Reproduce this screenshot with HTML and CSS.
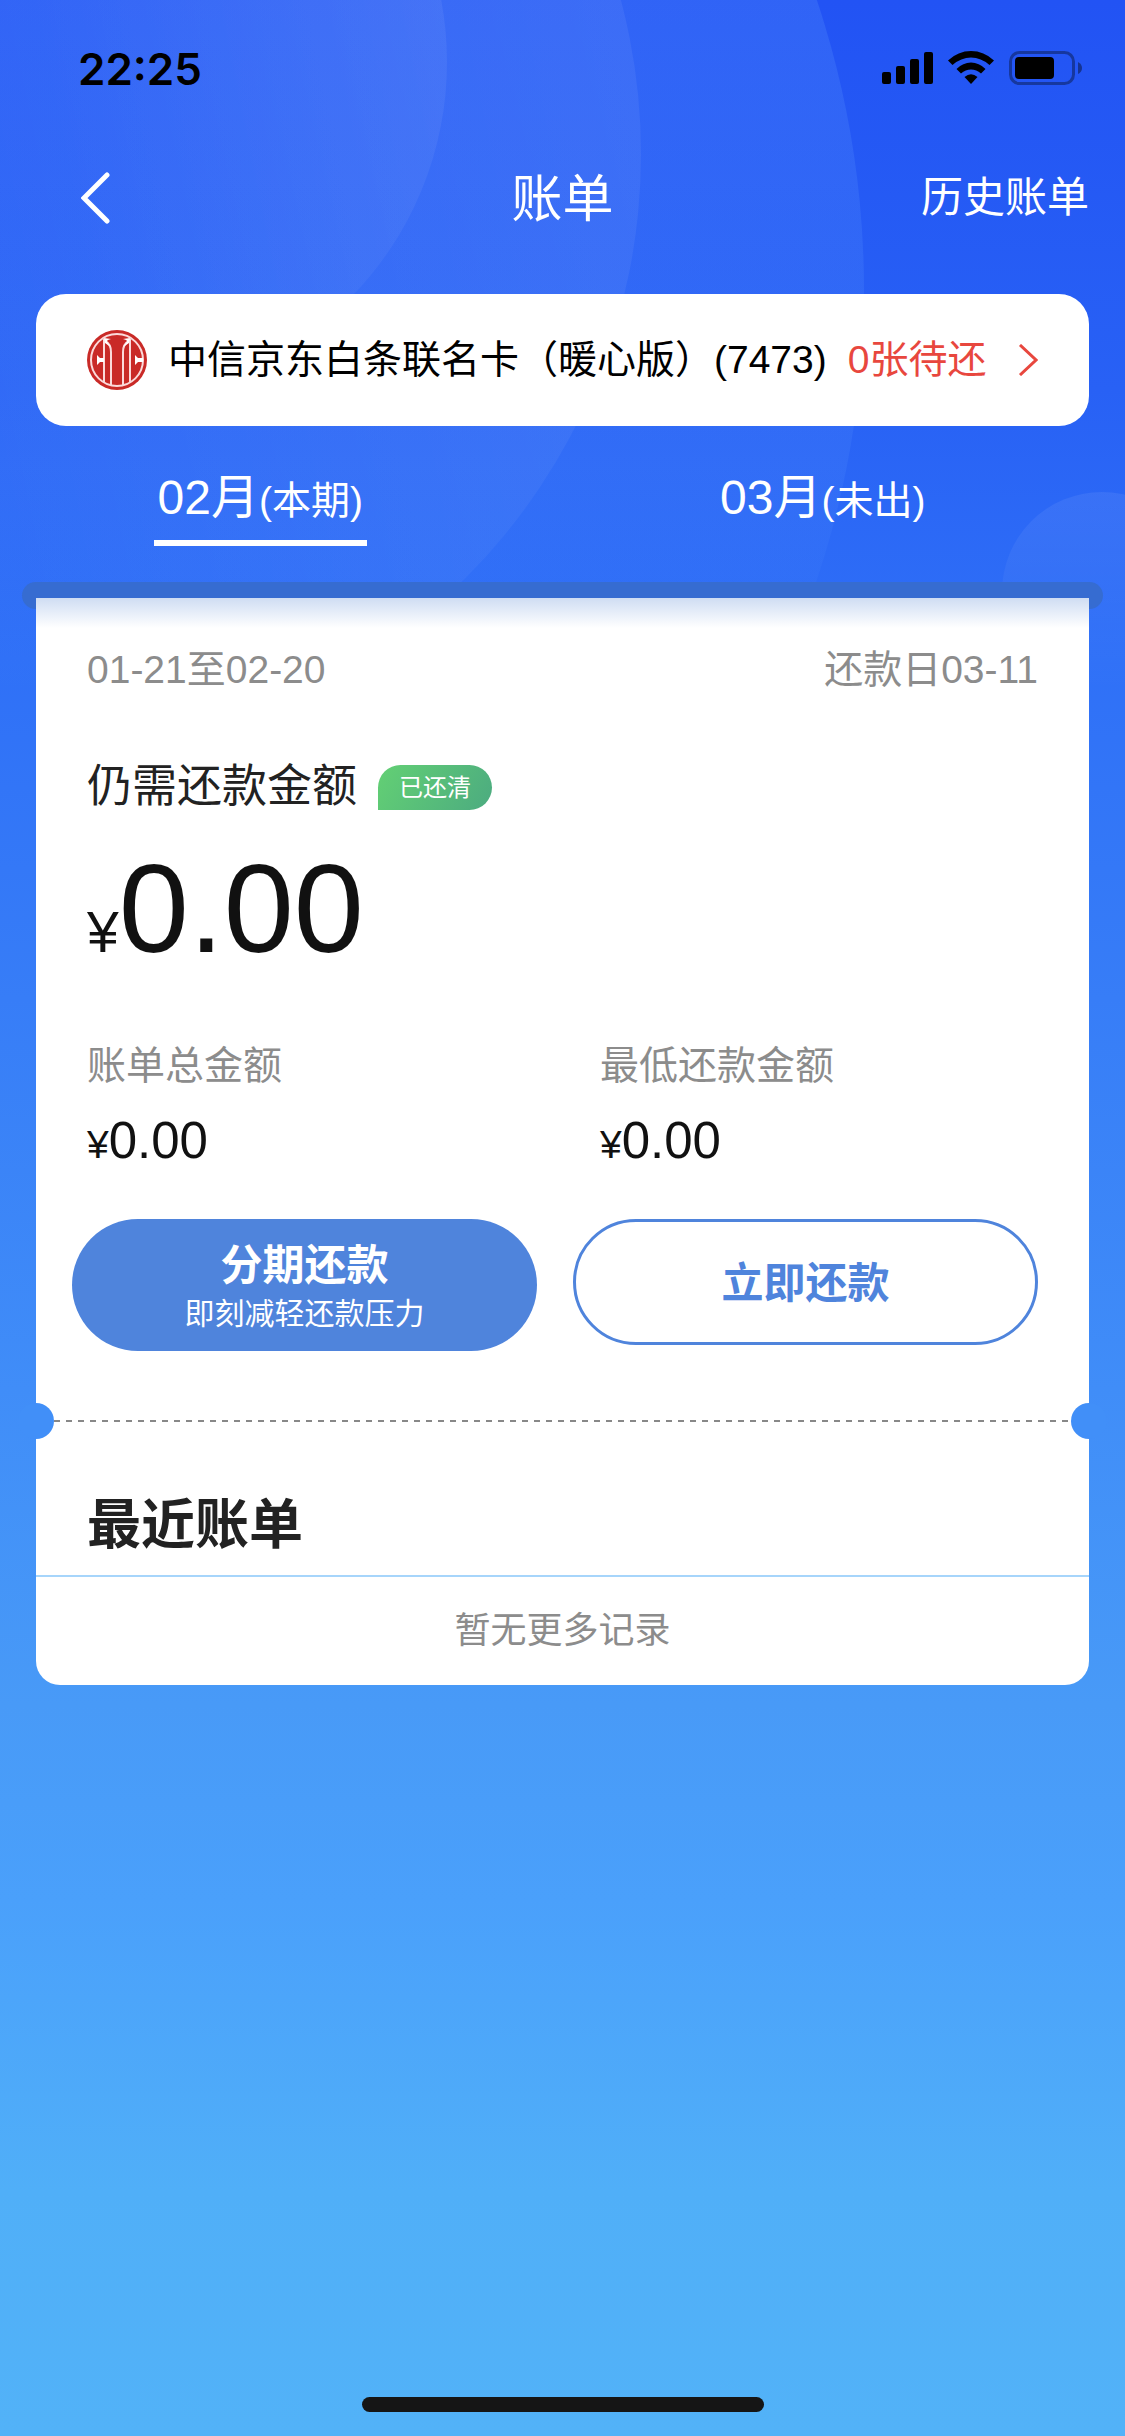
FILE: index.html
```html
<!DOCTYPE html>
<html lang="zh-CN">
<head>
<meta charset="utf-8">
<meta name="viewport" content="width=device-width, initial-scale=1">
<title>账单</title>
<link rel="stylesheet" href="styles.css">
</head>
<body>
<div class="page">
  <svg class="backdrop" width="1125" height="700" viewBox="0 0 1125 700" aria-hidden="true">
    <defs>
      <linearGradient id="halo" x1="0" y1="0" x2="0" y2="1">
        <stop offset="0.35" stop-color="#6aa5ff" stop-opacity="0.2"/>
        <stop offset="0.6" stop-color="#6aa5ff" stop-opacity="0.12"/>
        <stop offset="0.72" stop-color="#6aa5ff" stop-opacity="0"/>
      </linearGradient>
      <linearGradient id="ring" x1="0" y1="0.6" x2="1" y2="0.4">
        <stop offset="0.4" stop-color="#fff" stop-opacity="0"/>
        <stop offset="1" stop-color="#fff" stop-opacity="0.06"/>
      </linearGradient>
      <linearGradient id="bubble" x1="0" y1="0" x2="0" y2="1">
        <stop offset="0" stop-color="#fff" stop-opacity="0.07"/>
        <stop offset="1" stop-color="#fff" stop-opacity="0"/>
      </linearGradient>
    </defs>
    <circle cx="-51" cy="290" r="915" fill="url(#halo)"/>
    <circle cx="41" cy="154" r="600" fill="url(#ring)"/>
    <circle cx="111" cy="62" r="336" fill="url(#ring)"/>
    <circle cx="1102" cy="592" r="100" fill="url(#bubble)"/>
  </svg>

  <div class="status">
    <span class="time">22:25</span>
    <svg class="status-icons" width="202" height="36" viewBox="0 0 202 36" aria-hidden="true">
      <rect x="0" y="21" width="9" height="12" rx="2"/>
      <rect x="14" y="15" width="9" height="18" rx="2"/>
      <rect x="28" y="8" width="9" height="25" rx="2"/>
      <rect x="42" y="1" width="9" height="32" rx="2"/>
      <path d="M66 9.500Q76 0 89 0T112 9.500L107.500 14Q99 6.500 89 6.500T70.500 14Z"/>
      <path d="M74.500 18Q81 11.500 89 11.500T103.500 18L99 22.500Q94.500 18.500 89 18.500T79 22.500Z"/>
      <path d="M82.500 26Q89 20.500 95.500 26L89 33Z"/>
      <rect x="128.500" y="1.500" width="63" height="31" rx="9" fill="none" stroke="#000" stroke-opacity="0.35" stroke-width="3"/>
      <rect x="133" y="6" width="39" height="22" rx="4"/>
      <path d="M196 11Q200 13 200 17T196 23Z" fill-opacity="0.4"/>
    </svg>
  </div>

  <header class="nav">
    <button class="back" type="button" aria-label="返回">
      <svg width="30" height="54" viewBox="0 0 30 54" aria-hidden="true"><path d="M26 4L3 27L26 50" fill="none" stroke="#fff" stroke-width="5" stroke-linecap="round"/></svg>
    </button>
    <h1 class="title">账单</h1>
    <a class="history" href="#history">历史账单</a>
  </header>

  <main>
    <a class="bank" href="#cards">
      <svg class="bank-logo" width="60" height="60" viewBox="0 0 60 60" aria-hidden="true">
        <circle cx="30" cy="30" r="30" fill="#c92a27"/>
        <circle cx="30" cy="30" r="26" fill="none" stroke="#fbdada" stroke-width="2"/>
        <g fill="none" stroke="#fbdada" stroke-width="2">
          <path d="M17 9V53"/>
          <path d="M43 9V53"/>
          <path d="M24 56V22Q24 14 18 11"/>
          <path d="M36 56V22Q36 14 42 11"/>
        </g>
        <path d="M17 8L24 9Q18 10 21 13L24 17L18 13Z" fill="#fff"/>
        <path d="M43 8L36 9Q42 10 39 13L36 17L42 13Z" fill="#fff"/>
        <path d="M10 25L13 28H17V32H13L10 35Z" fill="#fff"/>
        <path d="M48 25L51 28H56V32H51L48 35Z" fill="#fff"/>
      </svg>
      <span class="bank-name">中信京东白条联名卡（暖心版）(7473)</span>
      <span class="bank-due">0张待还</span>
      <svg class="bank-arrow" width="21" height="32" viewBox="0 0 21 32" aria-hidden="true"><path d="M3 1L19 16L3 31" fill="none" stroke="#e8473e" stroke-width="3"/></svg>
    </a>

    <nav class="tabs">
      <a class="tab tab-current" href="#current">02月<small>(本期)</small></a>
      <a class="tab" href="#next">03月<small>(未出)</small></a>
    </nav>

    <div class="slot"></div>
    <article class="paper">
      <div class="period"><span>01-21至02-20</span><span>还款日03-11</span></div>
      <div class="due"><h2 class="due-label">仍需还款金额</h2><span class="badge">已还清</span></div>
      <p class="total"><span class="total-sign">¥</span>0.00</p>
      <dl class="amounts">
        <div><dt>账单总金额</dt><dd><small>¥</small>0.00</dd></div>
        <div><dt>最低还款金额</dt><dd><small>¥</small>0.00</dd></div>
      </dl>
      <div class="actions">
        <button class="btn btn-fill" type="button">分期还款<small>即刻减轻还款压力</small></button>
        <button class="btn btn-line" type="button">立即还款</button>
      </div>
      <div class="tear"></div>
      <h2 class="recent">最近账单</h2>
      <p class="empty">暂无更多记录</p>
    </article>
  </main>
  <div class="home"></div>
</div>
</body>
</html>
```
FILE: styles.css
```css
* {
  box-sizing: border-box;
}

body {
  margin: 0;
  font-family: "Liberation Sans", "Noto Sans CJK SC", sans-serif;
}

h1, h2, p, dl, dd {
  margin: 0;
  font-weight: 400;
}

a {
  color: inherit;
  text-decoration: none;
}

button {
  margin: 0;
  padding: 0;
  border: 0;
  background: none;
  font-family: inherit;
  cursor: pointer;
}

svg {
  display: block;
}

.page {
  position: relative;
  display: flex;
  flex-direction: column;
  min-height: 100vh;
  overflow: hidden;
  background: linear-gradient(#2253f4 0%, #2861f5 16%, #2f70f7 27%, #377df7 41%, #408df8 57%, #489af7 70%, #4aa0fb 78%, #50aff8 90%, #52b2f8 100%);
}

.backdrop {
  position: absolute;
  top: 0;
  left: 0;
}

.status,
.nav,
main {
  position: relative;
}

.status {
  display: flex;
  align-items: center;
  justify-content: space-between;
  height: 138px;
  padding: 0 41px 0 78px;
}

.time {
  font: 600 44px/60px Inter, sans-serif;
}

.nav {
  display: grid;
  grid-template-columns: 1fr auto 1fr;
  align-items: center;
  height: 120px;
  padding: 0 36px;
  color: #fff;
}

.back {
  justify-self: start;
  padding: 0 45px;
}

.title {
  padding-top: 3px;
  font-size: 51px;
  line-height: 72px;
}

.history {
  justify-self: end;
  font-size: 42px;
  line-height: 60px;
}

.bank {
  display: flex;
  align-items: center;
  height: 132px;
  margin: 36px 36px 0;
  padding: 0 51px;
  border-radius: 30px;
  background: #fff;
  color: #000;
  font-size: 39px;
  line-height: 60px;
  white-space: nowrap;
}

.bank-name {
  margin-left: 21px;
}

.bank-due {
  margin-left: 21px;
  color: #e8473e;
}

.bank-arrow {
  margin-left: auto;
}

.tabs {
  display: grid;
  grid-template-columns: 1fr 1fr;
  height: 156px;
  padding-top: 39px;
  color: #fff;
}

.tab {
  justify-self: center;
  align-self: start;
  margin-right: 42px;
  padding: 0 4px 6px;
  border-bottom: 6px solid transparent;
  font-size: 48px;
  line-height: 66px;
}

.tab small {
  font-size: 39px;
}

.tab-current {
  border-color: #fff;
}

.slot {
  height: 27px;
  margin: 0 22px;
  border-radius: 14px;
  background: #366cd1;
}

.paper {
  position: relative;
  margin: -11px 36px 0;
  padding-top: 42px;
  border-radius: 0 0 24px 24px;
  background: linear-gradient(#cfddf3, #fff 30px);
}

.period {
  display: flex;
  justify-content: space-between;
  padding: 0 51px;
  color: #8c8c8c;
  font-size: 39px;
  line-height: 60px;
}

.due {
  display: flex;
  align-items: center;
  gap: 21px;
  margin-top: 54px;
  padding: 0 51px;
}

.due-label {
  color: #222;
  font-size: 45px;
  line-height: 66px;
}

.badge {
  padding: 0 21px;
  border-radius: 23px 23px 23px 0;
  background: linear-gradient(120deg, #63d074, #4cab80);
  color: #fff;
  font-size: 24px;
  line-height: 45px;
}

.total {
  margin-top: 11px;
  padding: 0 51px;
  color: #111;
  font-size: 126px;
  line-height: 156px;
}

.total-sign {
  font-size: 57px;
}

.amounts {
  display: grid;
  grid-template-columns: 1fr 1fr;
  gap: 24px;
  margin-top: 26px;
  padding-left: 51px;
}

.amounts dt {
  color: #8c8c8c;
  font-size: 39px;
  line-height: 60px;
}

.amounts dd {
  margin-top: 9px;
  color: #111;
  font-size: 51px;
  line-height: 72px;
}

.amounts small {
  font-size: 39px;
}

.actions {
  display: grid;
  grid-template-columns: 1fr 1fr;
  align-items: start;
  gap: 36px;
  margin-top: 38px;
  padding: 0 51px 0 36px;
}

.btn {
  padding-top: 3px;
  border-radius: 66px;
  font-size: 42px;
  font-weight: 700;
  line-height: 54px;
}

.btn-fill {
  height: 132px;
  background: #4f84dc;
  color: #fff;
}

.btn-fill small {
  display: block;
  font-size: 30px;
  font-weight: 400;
  line-height: 42px;
}

.btn-line {
  height: 126px;
  border: 3px solid #4f84dc;
  color: #4f84dc;
}

.tear {
  position: relative;
  height: 2px;
  margin: 69px 18px 0;
  background: repeating-linear-gradient(90deg, #888 0 6px, transparent 6px 12px);
}

.tear::before,
.tear::after {
  content: "";
  position: absolute;
  top: -17px;
  width: 36px;
  height: 36px;
  border-radius: 50%;
  background: #418ff8;
}

.tear::before {
  left: -36px;
}

.tear::after {
  right: -36px;
}

.recent {
  margin-top: 64px;
  padding: 0 51px 11px;
  border-bottom: 2px solid #a6d5fb;
  color: #222;
  font-size: 54px;
  font-weight: 700;
  line-height: 78px;
}

.empty {
  padding: 24px 0;
  color: #8c8c8c;
  font-size: 36px;
  line-height: 60px;
  text-align: center;
}

.home {
  position: relative;
  width: 402px;
  height: 15px;
  margin: auto auto 24px;
  border-radius: 8px;
  background: #151515;
}
```
